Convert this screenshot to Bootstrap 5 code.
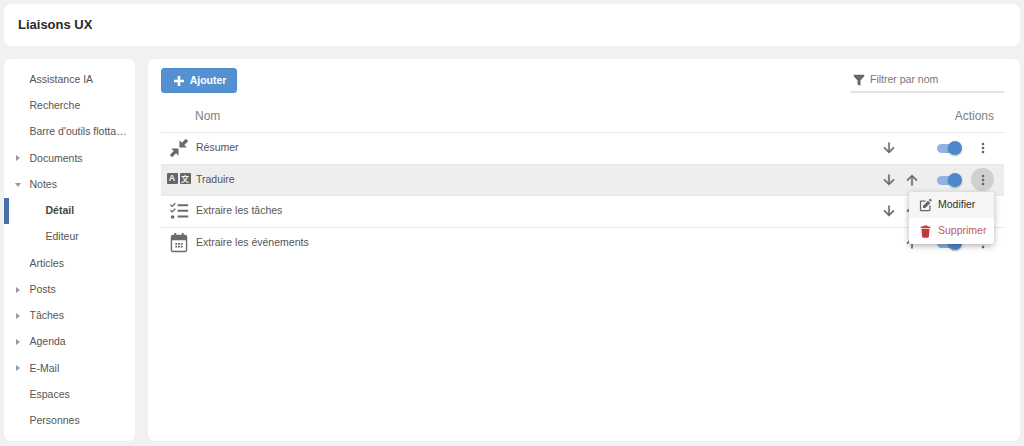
<!doctype html>
<html lang="fr"><head><meta charset="utf-8">
<link rel="stylesheet" href="https://cdn.jsdelivr.net/npm/bootstrap@5.3.0/dist/css/bootstrap.min.css">
<style>
html,body{height:100%}
body{background:#f1f1f1;font-family:"Liberation Sans",Arial,sans-serif;font-size:10.5px;color:#555;overflow:hidden}
.shell{height:446px;padding:4px 4px 5px;gap:13px}
.top-panel{height:42px;border-radius:7px;padding-left:14px;font-size:13px;font-weight:700;color:#2a2a2a}
.body-row{gap:13px;min-height:0}
.side-panel{width:131px;border-radius:7px;padding:7.5px 0 0;flex:none}
.side-item{height:26.25px;padding:0 2px 0 25.5px;display:flex;align-items:center;position:relative;color:#555;white-space:nowrap}
.side-sub{padding-left:41.5px}
.side-active{font-weight:700;color:#444}
.side-active::before{content:"";position:absolute;left:0;top:0;bottom:0;width:5px;background:#4a6fa5}
.caret-r,.caret-d{position:absolute;width:0;height:0}
.caret-r{left:12px;border:3px solid transparent;border-left:4px solid #999;border-right:0}
.caret-d{left:11px;border:3px solid transparent;border-top:4px solid #999;border-bottom:0}
.main-panel{border-radius:7px;padding:9px 16px 0 13px;position:relative}
.add-btn{background:#5590d0;border:1px solid #4f8acb;color:#fff;font-size:10.5px;font-weight:700;height:25px;width:76px;padding:0 1px 0 0;border-radius:3px;gap:3px}
.add-btn:hover{background:#5590d0;color:#fff}
.add-btn svg{width:16px;height:16px;fill:#fff}
.filter-box{width:154px;height:25px;border-bottom:2px solid #e4e4e4;gap:4px;padding-left:2px;color:#777}
.filter-box svg{width:14px;height:14px;fill:#666}
.head-row{height:40px;border-bottom:1px solid #e8e8e8;color:#808080;font-size:12px;padding:6px 10px 0 34px}
.data-row{height:31.5px;border-bottom:1px solid #e8e8e8;padding-right:10px}
.row-label{flex-grow:1;margin-top:-.5px}
.row-hl{background:#eee}
.row-ico{width:35px;flex:none;display:flex;justify-content:center;align-items:center;gap:1px}
.row-ico svg{width:22px;height:22px;fill:#6a6a6a}
.act-ico{width:23px;display:flex;justify-content:center}
.act-ico svg{width:16px;height:16px;fill:#666;stroke:#666;stroke-width:.6}
.slot-tog{width:26px;margin-left:13px;margin-right:9px;position:relative;height:14px}
.tog-track{position:absolute;left:1px;right:2px;top:3px;height:9px;border-radius:5px;background:#8fb4e0}
.tog-knob{position:absolute;right:0;top:0;width:14px;height:14px;border-radius:50%;background:#4d88cf;box-shadow:0 1px 2px rgba(0,0,0,.3)}
.dots{width:23px;height:23px;border-radius:50%;display:flex;align-items:center;justify-content:center}
.dots svg{width:16px;height:16px;fill:#666}
.dots-on{background:#d0d0d0}
.tr-box{width:11px;height:11px;background:#666;color:#eee;font-size:9px;font-weight:700;border-radius:1px;display:flex;align-items:center;justify-content:center;line-height:1;margin-top:-2px}
.tr-cjk{font-family:"Noto Sans CJK SC",sans-serif;font-size:8px;margin-left:1px}
.ctx-menu{display:block;position:absolute;left:761px;top:133px;width:85px;min-width:0;padding:0;border:0;border-radius:3px;box-shadow:0 2px 6px rgba(0,0,0,.3);overflow:hidden}
.ctx-menu .dropdown-item{height:26px;padding:0 0 0 9px;display:flex;align-items:center;gap:5px;font-size:10.5px;color:#333}
.ctx-menu svg{width:15px;height:15px;fill:#666}
.ctx-menu .dropdown-item.ctx-first{background:#f5f5f5}
.ctx-menu .dropdown-item.ctx-del{color:#c0585b}
.ctx-del svg{fill:#c0393b}
</style></head><body>
<div class="shell d-flex flex-column">
 <div class="top-panel bg-white d-flex align-items-center">Liaisons UX</div>
 <div class="body-row d-flex flex-grow-1">
  <nav class="side-panel bg-white">
   <div class="side-item"><span>Assistance IA</span></div>
   <div class="side-item"><span>Recherche</span></div>
   <div class="side-item"><span>Barre d'outils flotta…</span></div>
   <div class="side-item"><i class="caret-r"></i><span>Documents</span></div>
   <div class="side-item"><i class="caret-d"></i><span>Notes</span></div>
   <div class="side-item side-sub side-active"><span>Détail</span></div>
   <div class="side-item side-sub"><span>Editeur</span></div>
   <div class="side-item"><span>Articles</span></div>
   <div class="side-item"><i class="caret-r"></i><span>Posts</span></div>
   <div class="side-item"><i class="caret-r"></i><span>Tâches</span></div>
   <div class="side-item"><i class="caret-r"></i><span>Agenda</span></div>
   <div class="side-item"><i class="caret-r"></i><span>E-Mail</span></div>
   <div class="side-item"><span>Espaces</span></div>
   <div class="side-item"><span>Personnes</span></div>
  </nav>
  <main class="main-panel bg-white flex-grow-1">
   <div class="d-flex justify-content-between">
    <button class="btn add-btn d-flex align-items-center justify-content-center"><svg viewBox="0 0 24 24"><path d="M19.5 14H14v5.500h-4V14H4.500v-4H10V4.500h4V10h5.500z"/></svg>Ajouter</button>
    <div class="filter-box d-flex align-items-center"><svg viewBox="0 0 24 24"><path d="M3 3h18v2.500L14.500 13v9l-5-2.500V13L3 5.500z"/></svg>Filtrer par nom</div>
   </div>
   <div class="head-row d-flex align-items-center justify-content-between"><span>Nom</span><span>Actions</span></div>
   <div class="data-row d-flex align-items-center">
    <span class="row-ico"><svg viewBox="0 0 24 24"><path d="M12.500 11.500V3.500l2.700 2.700L19.500 2l2.500 2.500-4.200 4.300 2.700 2.700zM11.500 12.500v8l-2.700-2.700L4.500 22 2 19.500l4.200-4.300-2.700-2.700z"/></svg></span>
    <span class="row-label">Résumer</span>
    <span class="act-ico"><svg viewBox="0 0 24 24"><path d="M20 12l-1.410-1.410L13 16.170V4h-2v12.170l-5.580-5.590L4 12l8 8 8-8z"/></svg></span>
    <span class="act-ico"></span>
    <span class="slot-tog"><i class="tog-track"></i><i class="tog-knob"></i></span>
    <span class="dots"><svg viewBox="0 0 24 24"><path d="M12 8c1.100 0 2-.9 2-2s-.9-2-2-2-2 .9-2 2 .9 2 2 2zm0 2c-1.100 0-2 .9-2 2s.9 2 2 2 2-.9 2-2-.9-2-2-2zm0 6c-1.100 0-2 .9-2 2s.9 2 2 2 2-.9 2-2-.9-2-2-2z"/></svg></span>
   </div>
   <div class="data-row row-hl d-flex align-items-center">
    <span class="row-ico"><span class="tr-box">A</span><span class="tr-box tr-cjk">文</span></span>
    <span class="row-label">Traduire</span>
    <span class="act-ico"><svg viewBox="0 0 24 24"><path d="M20 12l-1.410-1.410L13 16.170V4h-2v12.170l-5.580-5.590L4 12l8 8 8-8z"/></svg></span>
    <span class="act-ico"><svg viewBox="0 0 24 24"><path d="M4 12l1.410 1.410L11 7.830V20h2V7.830l5.580 5.590L20 12l-8-8-8 8z"/></svg></span>
    <span class="slot-tog"><i class="tog-track"></i><i class="tog-knob"></i></span>
    <span class="dots dots-on"><svg viewBox="0 0 24 24"><path d="M12 8c1.100 0 2-.9 2-2s-.9-2-2-2-2 .9-2 2 .9 2 2 2zm0 2c-1.100 0-2 .9-2 2s.9 2 2 2 2-.9 2-2-.9-2-2-2zm0 6c-1.100 0-2 .9-2 2s.9 2 2 2 2-.9 2-2-.9-2-2-2z"/></svg></span>
   </div>
   <div class="data-row d-flex align-items-center">
    <span class="row-ico"><svg viewBox="0 0 24 24"><path d="M2 5.500l1-1 1.500 1.500L7.500 3l1 1-4 4zM2 11.500l1-1 1.500 1.500 3-3 1 1-4 4z"/><circle cx="5" cy="18.500" r="2"/><path d="M10.500 4.500H22v2.200H10.500zM10.500 10.500H22v2.200H10.500zM10.500 17H22v2.200H10.500z"/></svg></span>
    <span class="row-label">Extraire les tâches</span>
    <span class="act-ico"><svg viewBox="0 0 24 24"><path d="M20 12l-1.410-1.410L13 16.170V4h-2v12.170l-5.580-5.590L4 12l8 8 8-8z"/></svg></span>
    <span class="act-ico"><svg viewBox="0 0 24 24"><path d="M4 12l1.410 1.410L11 7.830V20h2V7.830l5.580 5.590L20 12l-8-8-8 8z"/></svg></span>
    <span class="slot-tog"><i class="tog-track"></i><i class="tog-knob"></i></span>
    <span class="dots"><svg viewBox="0 0 24 24"><path d="M12 8c1.100 0 2-.9 2-2s-.9-2-2-2-2 .9-2 2 .9 2 2 2zm0 2c-1.100 0-2 .9-2 2s.9 2 2 2 2-.9 2-2-.9-2-2-2zm0 6c-1.100 0-2 .9-2 2s.9 2 2 2 2-.9 2-2-.9-2-2-2z"/></svg></span>
   </div>
   <div class="data-row border-0 d-flex align-items-center">
    <span class="row-ico"><svg viewBox="0 0 24 24"><path d="M8 12h2v2H8zM11 12h2v2h-2zM14 12h2v2h-2zM8 15h2v2H8zM11 15h2v2h-2zM14 15h2v2h-2z"/><path d="M7 1h2v2h6V1h2v2h1.500A2.500 2.500 0 0 1 21 5.500v14a2.500 2.500 0 0 1-2.500 2.500h-13A2.500 2.500 0 0 1 3 19.500v-14A2.500 2.500 0 0 1 5.500 3H7zM4.500 9v10.500a1 1 0 0 0 1 1h13a1 1 0 0 0 1-1V9z"/></svg></span>
    <span class="row-label">Extraire les événements</span>
    <span class="act-ico"></span>
    <span class="act-ico"><svg viewBox="0 0 24 24"><path d="M4 12l1.410 1.410L11 7.830V20h2V7.830l5.580 5.590L20 12l-8-8-8 8z"/></svg></span>
    <span class="slot-tog"><i class="tog-track"></i><i class="tog-knob"></i></span>
    <span class="dots"><svg viewBox="0 0 24 24"><path d="M12 8c1.100 0 2-.9 2-2s-.9-2-2-2-2 .9-2 2 .9 2 2 2zm0 2c-1.100 0-2 .9-2 2s.9 2 2 2 2-.9 2-2-.9-2-2-2zm0 6c-1.100 0-2 .9-2 2s.9 2 2 2 2-.9 2-2-.9-2-2-2z"/></svg></span>
   </div>
   <div class="dropdown-menu ctx-menu">
    <a class="dropdown-item ctx-first" href="#"><svg viewBox="0 0 24 24"><path d="M5 4c-1.110 0-2 .89-2 2v13a2 2 0 0 0 2 2h13a2 2 0 0 0 2-2v-7h-2v7H5V6h7V4H5m13.800-2.500l-1.600 1.600 3 3 1.600-1.600a1 1 0 0 0 0-1.400l-1.600-1.600a1 1 0 0 0-1.400 0zM16 4.300L8 12.300V16h3.700l8-8z"/></svg>Modifier</a>
    <a class="dropdown-item ctx-del" href="#"><svg viewBox="0 0 24 24"><path d="M19.500 4h-4l-1-1.500h-5L8.500 4h-4v2.200h15zM5.500 7.500l1 12.500a2 2 0 0 0 2 1.800h7a2 2 0 0 0 2-1.800l1-12.500z"/></svg>Supprimer</a>
   </div>
  </main>
 </div>
</div>
<script src="https://cdn.jsdelivr.net/npm/bootstrap@5.3.0/dist/js/bootstrap.bundle.min.js"></script>
</body></html>
